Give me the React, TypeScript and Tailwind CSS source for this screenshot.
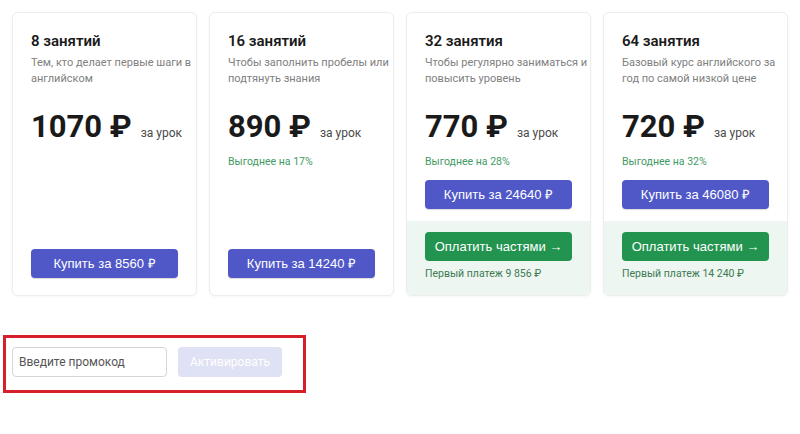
type Plan = {
  title: string;
  desc: [string, string];
  price: string;
  save?: string;
  total: string;
  first?: string;
};

const PLANS: Plan[] = [
  { title: '8 занятий', desc: ['Тем, кто делает первые шаги в', 'английском'], price: '1070', total: '8560' },
  { title: '16 занятий', desc: ['Чтобы заполнить пробелы или', 'подтянуть знания'], price: '890', save: '17%', total: '14240' },
  { title: '32 занятия', desc: ['Чтобы регулярно заниматься и', 'повысить уровень'], price: '770', save: '28%', total: '24640', first: '9 856' },
  { title: '64 занятия', desc: ['Базовый курс английского за', 'год по самой низкой цене'], price: '720', save: '32%', total: '46080', first: '14 240' },
];

const PlanCard = ({ plan }: { plan: Plan }) => {
  const buyBtn = (
    <button className="w-full h-[29px] rounded-[4px] bg-[#5058c8] text-white text-[13px] font-normal font-['Liberation_Sans'] shadow-[0_1px_1px_rgba(0,0,0,0.15)]">
      Купить за {plan.total} ₽
    </button>
  );

  return (
    <div className="flex flex-col bg-white border border-[#ededed] rounded-[6px] shadow-[0_1px_3px_rgba(0,0,0,0.04)] overflow-hidden">
      <div className="flex flex-col flex-1 px-[18px] pt-[18px]">
        <h3 className="text-[15px] leading-[20px] font-semibold text-[#1a1a1a]">{plan.title}</h3>
        <p className="mt-1 whitespace-nowrap text-[11px] leading-[16px] text-[#808080]">
          {plan.desc[0]}
          <br />
          {plan.desc[1]}
        </p>
        <div className="mt-[24px] flex items-baseline whitespace-nowrap">
          <span className="text-[31px] leading-[32px] font-bold text-[#1a1a1a]">{plan.price} ₽</span>
          <span className="ml-[9px] text-[12px] text-[#4a4a4a]">за урок</span>
        </div>
        {plan.save && (
          <p className="mt-[12px] text-[10.5px] leading-[14px] text-[#3f9a65]">Выгоднее на {plan.save}</p>
        )}
        {plan.first ? (
          <div className="mt-[11px] mb-[12px]">{buyBtn}</div>
        ) : (
          <div className="mt-auto mb-[17px]">{buyBtn}</div>
        )}
      </div>
      {plan.first && (
        <div className="bg-[#edf6f0] px-[18px] pt-[11px] pb-[15px]">
          <button className="w-full h-[29px] rounded-[4px] bg-[#23944f] text-white text-[13px] font-normal font-['Liberation_Sans']">
            Оплатить частями →
          </button>
          <p className="mt-[6px] text-[10.5px] leading-[14px] text-[#3d7a55]">Первый платеж {plan.first} ₽</p>
        </div>
      )}
    </div>
  );
};

export default function App() {
  return (
    <div className="w-[800px] h-[434px] bg-white font-['Roboto',sans-serif]">
      <div className="grid grid-cols-4 gap-3 px-3 pt-3 h-[296px]">
        {PLANS.map((p) => (
          <PlanCard key={p.title} plan={p} />
        ))}
      </div>
      <div className="mt-[39px] ml-[3px] w-[303px] h-[58px] border-[3px] border-[#d71f2b] flex items-start pl-[6px] pt-[9px]">
        <input
          placeholder="Введите промокод"
          className="w-[155px] h-[30px] rounded-[4px] border border-[#d6d6d6] px-[6px] text-[12px] text-[#333] placeholder:text-[#555] outline-none"
        />
        <button className="ml-[11px] w-[104px] h-[30px] rounded-[4px] bg-[#dfe1f4] text-white text-[12px]">
          Активировать
        </button>
      </div>
    </div>
  );
}
